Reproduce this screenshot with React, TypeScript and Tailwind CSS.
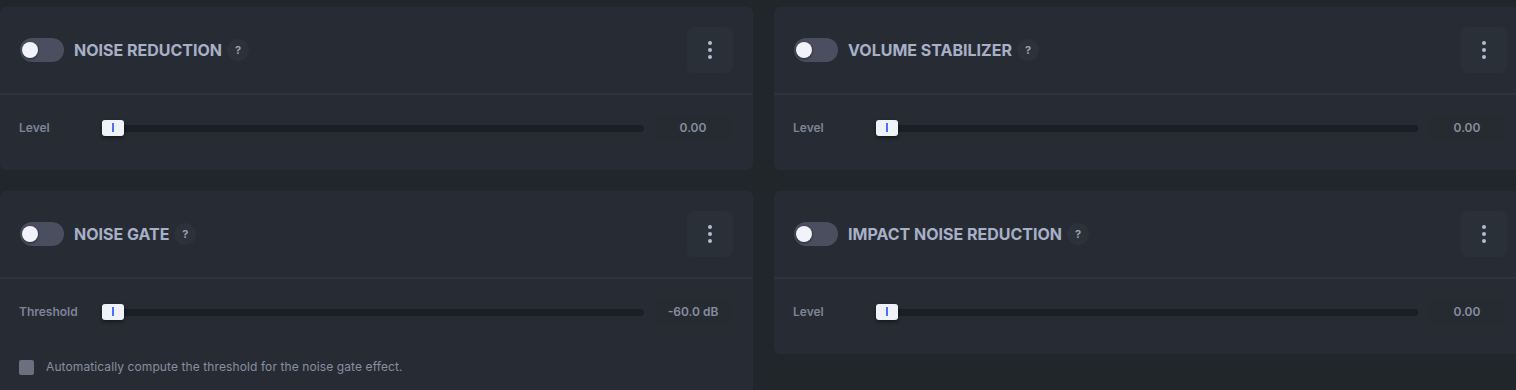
import { useState } from 'react';

type SliderProps = { label: string; value: string };

function Toggle() {
  const [on, setOn] = useState(false);
  return (
    <button
      onClick={() => setOn(!on)}
      className={`relative w-11 h-6 rounded-full shrink-0 ${on ? 'bg-[#4f6df5]' : 'bg-[#4a4e5f]'}`}
    >
      <span
        className={`absolute top-1 w-4 h-4 rounded-full bg-[#f1f2fa] shadow-[0_1px_3px_rgba(0,0,0,0.5)] ${on ? 'left-6' : 'left-[2px]'}`}
      />
    </button>
  );
}

function Kebab() {
  return (
    <button className="w-[46px] h-[46px] rounded-md bg-[#2a3038] flex flex-col items-center justify-center gap-[3px]">
      <span className="w-1 h-1 rounded-full bg-[#b4bbd2]" />
      <span className="w-1 h-1 rounded-full bg-[#b4bbd2]" />
      <span className="w-1 h-1 rounded-full bg-[#b4bbd2]" />
    </button>
  );
}

function Header({ title }: { title: string }) {
  return (
    <div className="h-[88px] flex items-center pl-5 pr-5 border-b-2 border-[#2d333b]">
      <Toggle />
      <span className="ml-[10px] text-[16px] leading-6 font-bold text-[#a8b0c8]">{title}</span>
      <span className="ml-[5px] w-[22px] h-[22px] rounded-full bg-[#2c313a] flex items-center justify-center text-[11px] font-bold text-[#9aa1b4]">
        ?
      </span>
      <div className="ml-auto">
        <Kebab />
      </div>
    </div>
  );
}

function SliderRow({ label, value }: SliderProps) {
  return (
    <div className="flex items-center h-[26px] pl-[19px] pr-[22px]">
      <span className="w-[83px] text-[12px] font-semibold text-[#7d8494]">{label}</span>
      <div className="relative flex-1 h-[7px] rounded-full bg-[#1b1f25]">
        <div className="absolute left-0 -top-[5px] w-[22px] h-4 rounded-[3px] bg-[#f0f2fa] shadow-[0_2px_4px_rgba(0,0,0,0.45)] flex items-center justify-center">
          <span className="w-[2px] h-[9px] bg-[#4f6df5]" />
        </div>
      </div>
      <div className="ml-[11px] w-[76px] h-[26px] rounded-[3px] bg-[#262b32] flex items-center justify-center text-[12px] font-semibold text-[#878ea0]">
        {value}
      </div>
    </div>
  );
}

function Card({ title, label, value, extra }: { title: string; label: string; value: string; extra?: boolean }) {
  return (
    <div className={`rounded-md bg-[#272c34] ${extra ? 'h-[210px]' : 'h-[163px]'}`}>
      <Header title={title} />
      <div className="pt-[20px]">
        <SliderRow label={label} value={value} />
        {extra && (
          <label className="flex items-center gap-3 pl-[19px] mt-[33px]">
            <span className="w-[15px] h-[15px] rounded-[2px] bg-[#6b7080]" />
            <span className="text-[12px] tracking-[0.1px] text-[#878ea0]">Automatically compute the threshold for the noise gate effect.</span>
          </label>
        )}
      </div>
    </div>
  );
}

export default function App() {
  return (
    <div className="w-[1516px] h-[390px] overflow-hidden bg-[#21262b] pt-[7px] font-['Inter','Noto_Sans',sans-serif]">
      <div className="grid grid-cols-[753px_753px] gap-x-[21px] gap-y-[21px] items-start">
        <Card title="NOISE REDUCTION" label="Level" value="0.00" />
        <Card title="VOLUME STABILIZER" label="Level" value="0.00" />
        <Card title="NOISE GATE" label="Threshold" value="-60.0 dB" extra />
        <Card title="IMPACT NOISE REDUCTION" label="Level" value="0.00" />
      </div>
    </div>
  );
}
